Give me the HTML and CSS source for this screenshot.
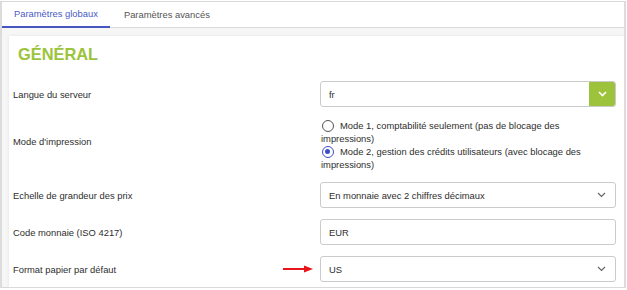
FILE: index.html
```html
<!DOCTYPE html>
<html lang="fr">
<head>
<meta charset="utf-8">
<title>Paramètres</title>
<link rel="stylesheet" href="styles.css">
</head>
<body>
<div class="frame">
  <div class="tabs">
    <div class="tab active">Paramètres globaux</div>
    <div class="tab">Paramètres avancés</div>
  </div>
  <div class="content">
    <div class="card">
      <h2 class="title">GÉNÉRAL</h2>
      <div class="form">
        <div class="label">Langue du serveur</div>
        <div class="select green">
          <span class="value">fr</span>
          <span class="btn"><svg width="9" height="6" viewBox="0 0 9 6"><polyline points="1,1 4.5,4.5 8,1" fill="none" stroke="#fff" stroke-width="1.6"/></svg></span>
        </div>

        <div class="label raised">Mode d'impression</div>
        <div class="radios">
          <div class="radio"><span class="dot"></span>Mode 1, comptabilité seulement (pas de blocage des impressions)</div>
          <div class="radio"><span class="dot on"></span>Mode 2, gestion des crédits utilisateurs (avec blocage des impressions)</div>
        </div>

        <div class="label">Echelle de grandeur des prix</div>
        <div class="select">
          <span class="value">En monnaie avec 2 chiffres décimaux</span>
          <svg class="chev" width="9" height="6" viewBox="0 0 9 6"><polyline points="1,1 4.5,4.5 8,1" fill="none" stroke="#666" stroke-width="1.2"/></svg>
        </div>

        <div class="label">Code monnaie (ISO 4217)</div>
        <div class="input">EUR</div>

        <div class="label arrowed">Format papier par défaut
          <svg class="arrow" width="30" height="8" viewBox="0 0 30 8"><line x1="0" y1="4" x2="23" y2="4" stroke="#e8141a" stroke-width="2"/><polygon points="21,0.5 30,4 21,7.5" fill="#e8141a"/></svg>
        </div>
        <div class="select">
          <span class="value">US</span>
          <svg class="chev" width="9" height="6" viewBox="0 0 9 6"><polyline points="1,1 4.5,4.5 8,1" fill="none" stroke="#666" stroke-width="1.2"/></svg>
        </div>
      </div>
    </div>
  </div>
</div>
</body>
</html>
```

FILE: styles.css
```css
html, body {
  margin: 0;
  padding: 0;
  background: #fff;
}
body {
  font-family: "Liberation Sans", Arial, sans-serif;
  font-size: 9.4px;
  color: #2e2e2e;
}
.frame {
  margin-top: 1px;
  width: 622px;
  height: 285px;
  border: 1px solid #d9d9d9;
  border-left: 2px solid #dcdcdc;
  border-right: 2px solid #dcdcdc;
  overflow: hidden;
  background: #fff;
}
.tabs {
  display: flex;
  height: 25px;
  border-bottom: 1px solid #dadada;
}
.tab {
  padding: 0 12px;
  line-height: 25px;
  color: #555;
}
.tab + .tab {
  margin-left: 2px;
}
.tab.active {
  color: #4a5bc4;
  border-bottom: 2px solid #4757c0;
  line-height: 24px;
  height: 24px;
  margin-bottom: -1px;
}
.content {
  background: #f6f6f6;
  padding: 8px 0 0 7px;
  height: 260px;
}
.card {
  background: #fff;
  padding: 8px 8px 20px 4px;
  box-shadow: 0 0 3px rgba(0, 0, 0, 0.08);
}
.title {
  margin: 0 0 17px;
  padding-left: 5px;
  font-size: 16.4px;
  line-height: 20px;
  font-weight: bold;
  color: #9bc43c;
}
.form {
  display: grid;
  grid-template-columns: 307px 296px;
  row-gap: 11px;
  align-items: center;
}
.label {
  color: #2e2e2e;
}
.label.raised {
  padding-bottom: 6px;
}
.label.arrowed {
  display: flex;
  align-items: center;
  justify-content: space-between;
  padding-right: 7px;
}
.select, .input {
  box-sizing: border-box;
  height: 26px;
  border: 1px solid #cbcbcb;
  border-radius: 3px;
  display: flex;
  align-items: center;
  padding-left: 8px;
  color: #2e2e2e;
  background: #fff;
}
.select {
  justify-content: space-between;
  padding-right: 9px;
}
.select.green {
  padding-right: 0;
  overflow: hidden;
}
.btn {
  width: 27px;
  height: 26px;
  margin: -1px -1px -1px 0;
  background: #9cc33b;
  border-radius: 0 3px 3px 0;
  display: flex;
  align-items: center;
  justify-content: center;
}
.radios {
  padding: 1px 30px 0 1px;
  line-height: 13px;
  height: 52px;
}
.dot {
  display: inline-block;
  box-sizing: border-box;
  width: 12px;
  height: 12px;
  border: 1px solid #555;
  border-radius: 50%;
  margin: 0 6px 0 1px;
  vertical-align: -3px;
  position: relative;
}
.dot.on {
  border-color: #3d4fc7;
  border-width: 1.5px;
}
.dot.on::after {
  content: "";
  position: absolute;
  left: 2px;
  top: 2px;
  width: 5px;
  height: 5px;
  border-radius: 50%;
  background: #3d4fc7;
}
```
